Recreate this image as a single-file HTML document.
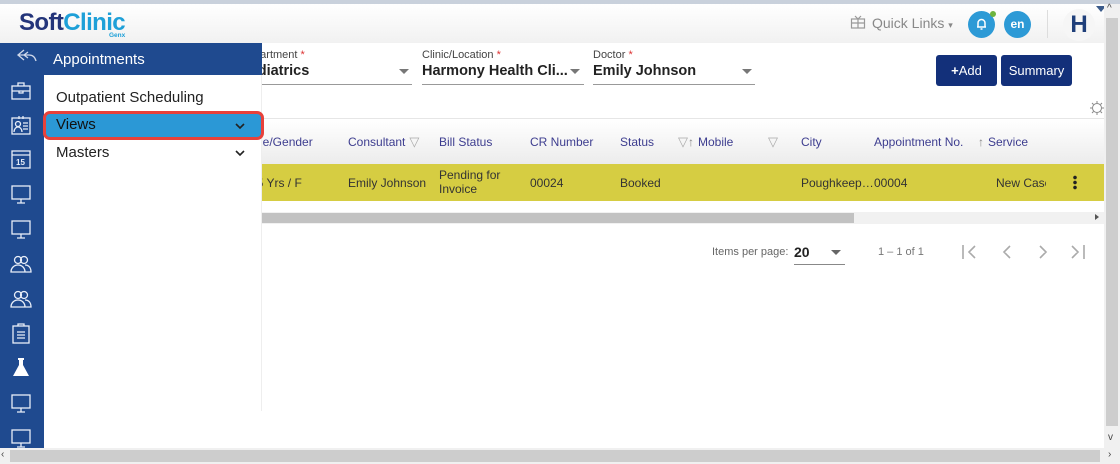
<!DOCTYPE html>
<html><head><meta charset="utf-8"><style>
*{margin:0;padding:0;box-sizing:border-box}
body{width:1120px;height:464px;overflow:hidden;background:#fff;font-family:"Liberation Sans",sans-serif;position:relative}
.a{position:absolute}
.hd{font-size:12px;color:#3d3d8f;line-height:14px;display:flex;align-items:center;gap:4px}
.cell{font-size:12px;color:#333}
.lbl{font-size:11px;color:#444}
.val{font-size:14.5px;font-weight:bold;color:#222}
.ul{border-bottom:1px solid #999}
.ic{position:absolute;left:10px;width:22px;height:22px}
.f{color:#aaa;font-size:13px}
</style></head><body>
<div class="a" style="left:0;top:0;width:1120px;height:4px;background:#c9d1dc"></div>
<div class="a" style="left:0;top:4px;width:1104px;height:39px;background:linear-gradient(#fff,#f1f1f1)"></div>
<div class="a" style="left:19px;top:9px;font-size:24px;font-weight:bold;letter-spacing:-0.6px;color:#24357a">Soft<span style="color:#1ea0d8">Clinic</span></div>
<div class="a" style="left:109px;top:32px;font-size:6.5px;font-weight:bold;color:#1ea0d8">Genx</div>
<svg class="a" style="left:850px;top:14px" width="16" height="16" viewBox="0 0 16 16" fill="none" stroke="#999" stroke-width="1.2"><rect x="1.5" y="5" width="13" height="9"/><path d="M1.5 9h13M8 5v9M5 2l3 3 3-3"/></svg>
<div class="a" style="left:872px;top:15px;font-size:14px;color:#888">Quick Links <span style="font-size:9px">▾</span></div>
<div class="a" style="left:968px;top:11px;width:27px;height:27px;border-radius:50%;background:#2d9ad6"></div>
<svg class="a" style="left:975px;top:17px" width="13" height="14" viewBox="0 0 13 14" fill="none" stroke="#fff" stroke-width="1.5"><path d="M3 10V6a3.5 3.5 0 017 0v4H2h9M5.5 12h2"/></svg>
<div class="a" style="left:990px;top:11px;width:6px;height:6px;border-radius:50%;background:#6db33f"></div>
<div class="a" style="left:1004px;top:11px;width:27px;height:27px;border-radius:50%;background:#2d9ad6;color:#fff;font-size:12px;font-weight:bold;text-align:center;line-height:27px">en</div>
<div class="a" style="left:1047px;top:10px;width:1px;height:28px;background:#ddd"></div>
<div class="a" style="left:1063px;top:9px;width:32px;height:32px;border-radius:50%;background:#f6f6f6;color:#1f3f7a;font-size:24px;font-weight:bold;text-align:center;line-height:32px">H</div>
<div class="a" style="left:1096px;top:6px;width:0;height:0;border-left:5px solid transparent;border-right:5px solid transparent;border-top:6px solid #3a5a8a"></div>
<div class="a" style="left:1104px;top:4px;width:16px;height:444px;background:#f0f0f0"></div>
<div class="a" style="left:1106px;top:18px;width:12px;height:408px;background:#cdcdcd"></div>
<div class="a" style="left:1107px;top:3px;font-size:10px;color:#444">^</div>
<div class="a" style="left:1108px;top:432px;font-size:10px;color:#444">v</div>
<div class="a" style="left:0;top:448px;width:1120px;height:16px;background:#f0f0f0"></div>
<div class="a" style="left:10px;top:450px;width:1090px;height:12px;background:#cdcdcd"></div>
<div class="a" style="left:1px;top:449px;font-size:10px;color:#444">‹</div>
<div class="a" style="left:1108px;top:449px;font-size:10px;color:#444">›</div>
<div class="a lbl" style="left:240px;top:49px">Department <span style="color:#d33">*</span></div>
<div class="a val" style="left:240px;top:63px">Pediatrics</div>
<div class="a ul" style="left:240px;top:84px;width:172px"></div>
<div class="a" style="left:399px;top:69px;border-left:5px solid transparent;border-right:5px solid transparent;border-top:5px solid #777"></div>
<div class="a lbl" style="left:422px;top:49px">Clinic/Location <span style="color:#d33">*</span></div>
<div class="a val" style="left:422px;top:63px">Harmony Health Cli...</div>
<div class="a ul" style="left:422px;top:84px;width:162px"></div>
<div class="a" style="left:570px;top:69px;border-left:5px solid transparent;border-right:5px solid transparent;border-top:5px solid #777"></div>
<div class="a lbl" style="left:593px;top:49px">Doctor <span style="color:#d33">*</span></div>
<div class="a val" style="left:593px;top:63px">Emily Johnson</div>
<div class="a ul" style="left:593px;top:84px;width:162px"></div>
<div class="a" style="left:742px;top:69px;border-left:5px solid transparent;border-right:5px solid transparent;border-top:5px solid #777"></div>
<div class="a" style="left:936px;top:55px;width:61px;height:31px;background:#13307a;border-radius:3px;color:#fff;font-size:13px;text-align:center;line-height:31px"><b>+</b>Add</div>
<div class="a" style="left:1001px;top:55px;width:71px;height:31px;background:#13307a;border-radius:3px;color:#fff;font-size:13px;text-align:center;line-height:31px">Summary</div>
<svg class="a" style="left:1089px;top:100px" width="16" height="16" viewBox="0 0 16 16" fill="none" stroke="#888" stroke-width="1"><circle cx="8" cy="8" r="4.5"/><path d="M8 1v2M8 13v2M1 8h2M13 8h2M3 3l1.5 1.5M11.5 11.5L13 13M13 3l-1.5 1.5M4.5 11.5L3 13"/></svg>
<div class="a" style="left:240px;top:118px;width:864px;height:1px;background:#e6e6e6"></div>
<div class="a" style="left:240px;top:119px;width:864px;height:45px;background:linear-gradient(#fff,#ececec)"></div>
<div class="a hd" style="left:248px;top:135px">Age/Gender</div>
<div class="a hd" style="left:348px;top:135px">Consultant <span class="f">▽</span></div>
<div class="a hd" style="left:439px;top:135px">Bill Status</div>
<div class="a hd" style="left:530px;top:135px">CR Number</div>
<div class="a hd" style="left:620px;top:135px">Status</div>
<div class="a hd" style="left:678px;top:135px"><span class="f">▽</span><span style="color:#888;margin-left:-4px">↑</span> Mobile</div>
<div class="a hd" style="left:768px;top:135px"><span class="f">▽</span></div>
<div class="a hd" style="left:801px;top:135px">City</div>
<div class="a hd" style="left:874px;top:135px">Appointment No.</div>
<div class="a hd" style="left:978px;top:135px"><span style="color:#888">↑</span>Service</div>
<div class="a" style="left:240px;top:164px;width:864px;height:37px;background:#d6cd42"></div>
<div class="a cell" style="left:250px;top:176px">45 Yrs / F</div>
<div class="a cell" style="left:348px;top:176px">Emily Johnson</div>
<div class="a cell" style="left:439px;top:168px;line-height:14px">Pending for<br>Invoice</div>
<div class="a cell" style="left:530px;top:176px">00024</div>
<div class="a cell" style="left:620px;top:176px">Booked</div>
<div class="a cell" style="left:801px;top:176px">Poughkeep…</div>
<div class="a cell" style="left:874px;top:176px">00004</div>
<div class="a cell" style="left:996px;top:176px;width:50px;overflow:hidden;white-space:nowrap">New Case</div>
<div class="a" style="left:1073px;top:175px;width:4px;height:15px;background:radial-gradient(circle,#222 1.6px,transparent 2px) 0 0/4px 5px"></div>
<div class="a" style="left:240px;top:212px;width:864px;height:12px;background:#f1f1f1"></div>
<div class="a" style="left:240px;top:213px;width:614px;height:10px;background:#c2c2c2"></div>
<div class="a" style="left:1095px;top:214px;border-top:3px solid transparent;border-bottom:3px solid transparent;border-left:4px solid #555"></div>
<div class="a" style="left:712px;top:246px;font-size:11px;color:#666">Items per page:</div>
<div class="a" style="left:794px;top:244px;font-size:14px;font-weight:bold;color:#222">20</div>
<div class="a" style="left:831px;top:250px;border-left:5px solid transparent;border-right:5px solid transparent;border-top:5px solid #666"></div>
<div class="a" style="left:794px;top:264px;width:51px;height:1px;background:#888"></div>
<div class="a" style="left:878px;top:246px;font-size:11px;color:#777">1 – 1 of 1</div>
<svg class="a" style="left:960px;top:243px" width="130" height="18" viewBox="0 0 130 18" fill="none" stroke="#aaa" stroke-width="1.6"><path d="M3 2v14M15 3l-6 6 6 6M50 3l-6 6 6 6M80 3l6 6-6 6M112 3l6 6-6 6M124 2v14"/></svg>
<div class="a" style="left:0;top:43px;width:44px;height:405px;background:#1f4a8f"></div>
<div class="a" style="left:44px;top:43px;width:218px;height:32px;background:#1f4a8f"></div>
<div class="a" style="left:44px;top:75px;width:218px;height:336px;background:#fff;border-right:1px solid #eee"></div>
<svg class="a" style="left:15px;top:48px" width="24" height="16" viewBox="0 0 24 16" fill="none" stroke="#cfd8ea" stroke-width="1.3"><path d="M9 2L3 7l6 5M3 7h11c4 0 6 2 7 6M13 4l-4 3 4 3"/></svg>
<div class="a" style="left:53px;top:51px;font-size:15px;color:#fff">Appointments</div>
<div class="a" style="left:56px;top:89px;font-size:15px;color:#222">Outpatient Scheduling</div>
<div class="a" style="left:43px;top:111px;width:221px;height:29px;background:#2b98d6;border:3px solid #e8413a;border-radius:7px"></div>
<div class="a" style="left:56px;top:116px;font-size:15px;color:#111">Views</div>
<div class="a" style="left:56px;top:144px;font-size:15px;color:#222">Masters</div>
<svg class="a" style="left:234px;top:122px" width="12" height="8" viewBox="0 0 12 8" fill="none" stroke="#222" stroke-width="1.6"><path d="M2 2l4 4 4-4"/></svg>
<svg class="a" style="left:234px;top:149px" width="12" height="8" viewBox="0 0 12 8" fill="none" stroke="#222" stroke-width="1.6"><path d="M2 2l4 4 4-4"/></svg>
<svg class="ic" style="top:80px" viewBox="0 0 22 22" fill="none" stroke="#e8eef8" stroke-width="1.3"><rect x="2" y="6" width="18" height="13"/><path d="M8 6V3h6v3M2 11h18M9 11v2h4v-2"/></svg>
<svg class="ic" style="top:114px" viewBox="0 0 22 22" fill="none" stroke="#e8eef8" stroke-width="1.3"><rect x="2" y="4" width="18" height="16"/><circle cx="8" cy="10" r="2.5"/><path d="M4 18c0-3 2-5 4-5s4 2 4 5M13 9h5M13 12h5M13 15h5M9 2v3M13 2v3"/></svg>
<svg class="ic" style="top:148px" viewBox="0 0 22 22" fill="none" stroke="#e8eef8" stroke-width="1.3"><rect x="2" y="3" width="18" height="17"/><path d="M2 7h18"/><text x="6" y="17" font-size="8" fill="#e8eef8" stroke="none" font-family="Liberation Sans" font-weight="bold">15</text></svg>
<svg class="ic" style="top:183px" viewBox="0 0 22 22" fill="none" stroke="#e8eef8" stroke-width="1.3"><rect x="2" y="3" width="18" height="13"/><path d="M11 16v4M7 20h8"/></svg>
<svg class="ic" style="top:218px" viewBox="0 0 22 22" fill="none" stroke="#e8eef8" stroke-width="1.3"><rect x="2" y="3" width="18" height="13"/><path d="M11 16v4M7 20h8"/></svg>
<svg class="ic" style="top:253px" viewBox="0 0 22 22" fill="none" stroke="#e8eef8" stroke-width="1.3"><circle cx="8" cy="7" r="3.5"/><circle cx="14" cy="7" r="3.5"/><path d="M1 19c0-4 3-7 7-7s7 3 7 7zM15 12c4 0 6 3 6 7h-6"/></svg>
<svg class="ic" style="top:288px" viewBox="0 0 22 22" fill="none" stroke="#e8eef8" stroke-width="1.3"><circle cx="8" cy="7" r="3.5"/><circle cx="14" cy="7" r="3.5"/><path d="M1 19c0-4 3-7 7-7s7 3 7 7zM15 12c4 0 6 3 6 7h-6"/></svg>
<svg class="ic" style="top:322px" viewBox="0 0 22 22" fill="none" stroke="#e8eef8" stroke-width="1.3"><rect x="3" y="4" width="16" height="17"/><path d="M8 4V2h6v2M7 10h8M7 13h8M7 16h8"/></svg>
<svg class="ic" style="top:356px" viewBox="0 0 22 22"><path d="M8 2h6v2h-1v5l6 11H3l6-11V4H8z" fill="#fff"/></svg>
<svg class="ic" style="top:392px" viewBox="0 0 22 22" fill="none" stroke="#e8eef8" stroke-width="1.3"><rect x="2" y="3" width="18" height="13"/><path d="M11 16v4M7 20h8"/></svg>
<svg class="ic" style="top:427px" viewBox="0 0 22 22" fill="none" stroke="#e8eef8" stroke-width="1.3"><rect x="2" y="3" width="18" height="13"/><path d="M11 16v4M7 20h8"/></svg>
</body></html>
